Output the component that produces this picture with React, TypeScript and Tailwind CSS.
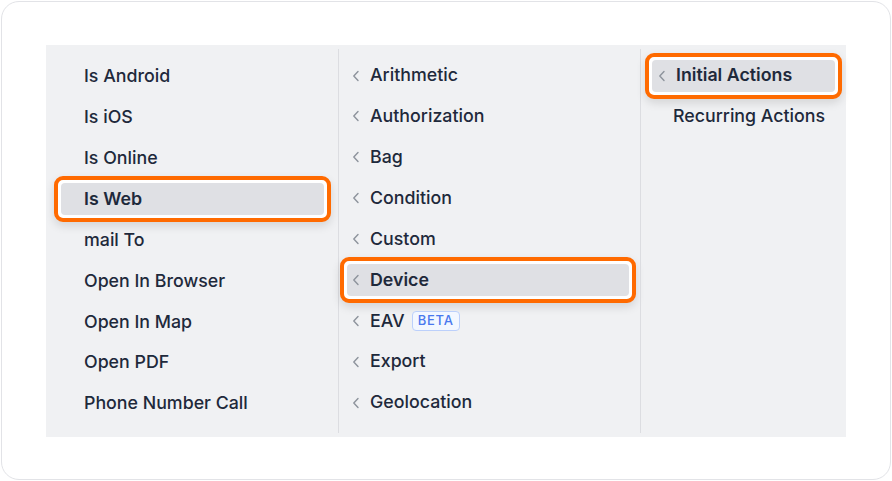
const col1 = ['Is Android', 'Is iOS', 'Is Online', 'Is Web', 'mail To', 'Open In Browser', 'Open In Map', 'Open PDF', 'Phone Number Call'];
const col2 = ['Arithmetic', 'Authorization', 'Bag', 'Condition', 'Custom', 'Device', 'EAV', 'Export', 'Geolocation'];

const Chevron = () => (
  <svg width="8" height="12" viewBox="0 0 8 12" fill="none" className="shrink-0">
    <path d="M6 1.5 L1.8 6 L6 10.5" stroke="#8d939c" strokeWidth="1.4" strokeLinecap="round" strokeLinejoin="round" />
  </svg>
);

const Item = ({ label, active, chevron, badge, pl }: { label: string; active?: boolean; chevron?: boolean; badge?: boolean; pl: string }) => {
  const inner = (
    <div className={`flex h-[32px] items-center rounded-[4px] ${pl} ${active ? 'bg-[#dfe0e4] font-semibold' : 'font-medium'}`}>
      {chevron && <span className="mr-[10px] flex w-[8px] items-center"><Chevron /></span>}
      <span>{label}</span>
      {badge && (
        <span className="ml-[7px] flex h-[20px] items-center rounded-[4px] border border-[#bcd0fb] bg-[#f3f7ff] px-[5px] text-[13px] font-medium tracking-[0.06em] text-[#4a78ee]">
          BETA
        </span>
      )}
    </div>
  );
  if (active) {
    return (
      <div className="-mx-[7px] -my-[7px] rounded-[9px] border-[4px] border-[#ff6a00] bg-white p-[3px] shadow-[0_4px_10px_rgba(0,0,0,0.12)]">
        {inner}
      </div>
    );
  }
  return inner;
};

export default function App() {
  return (
    <div className="h-[481px] w-[892px] bg-white p-[1px]" style={{ fontFamily: 'Inter, "Noto Sans", sans-serif' }}>
      <div className="flex h-full w-full items-center justify-center rounded-[18px] border-[1.5px] border-[#e2e3e7]">
        <div className="flex h-[392px] w-[800px] bg-[#f0f1f3] text-[17.8px] text-[#1e293b]">
          <div className="flex w-[292px] flex-col gap-[8.9px] pl-[15px] pr-[14px] pt-[16px]">
            {col1.map((l) => (
              <Item key={l} label={l} active={l === 'Is Web'} pl="pl-[23px]" />
            ))}
          </div>
          <div className="my-[4px] w-px bg-[#dcdde1]" />
          <div className="flex w-[301px] flex-col gap-[8.9px] pl-[8px] pr-[11px] pt-[15px]">
            {col2.map((l) => (
              <Item key={l} label={l} chevron active={l === 'Device'} badge={l === 'EAV'} pl="pl-[5px]" />
            ))}
          </div>
          <div className="my-[4px] w-px bg-[#dcdde1]" />
          <div className="flex flex-1 flex-col gap-[9px] pl-[11px] pr-[11px] pt-[15px]">
            <Item label="Initial Actions" chevron active pl="pl-[6px]" />
            <Item label="Recurring Actions" pl="pl-[21px]" />
          </div>
        </div>
      </div>
    </div>
  );
}
